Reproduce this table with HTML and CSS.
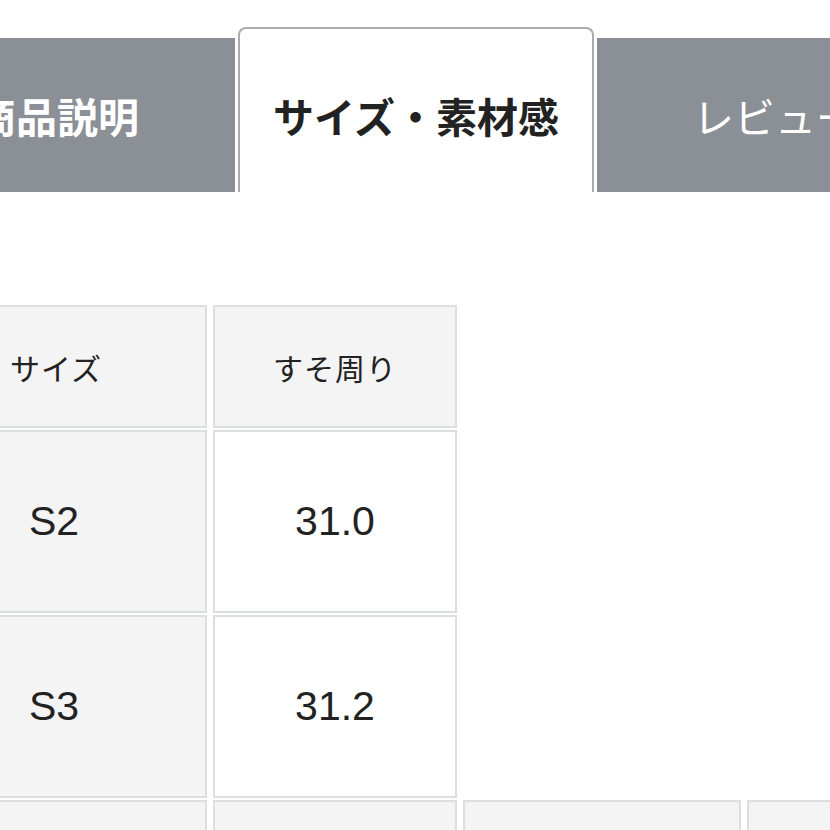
FILE: index.html
```html
<!DOCTYPE html>
<html lang="ja">
<head>
<meta charset="utf-8">
<link rel="stylesheet" href="styles.css">
</head>
<body>
<div class="page">
  <div class="tabs">
    <div class="tab tab-gray tab-bold">商品説明</div>
    <div class="tab tab-active">サイズ・素材感</div>
    <div class="tab tab-gray">レビュー</div>
  </div>

  <table class="size-table top-table">
    <tr class="row-head">
      <th class="c1 head">サイズ</th>
      <th class="c2 head">すそ周り</th>
    </tr>
    <tr class="row-body">
      <th class="c1 side num">S2</th>
      <td class="c2 num">31.0</td>
    </tr>
    <tr class="row-body">
      <th class="c1 side num">S3</th>
      <td class="c2 num">31.2</td>
    </tr>
  </table>

  <table class="size-table next-table">
    <tr class="row-next">
      <th class="c1 side"></th>
      <th class="c2 head"></th>
      <th class="c3 head"></th>
      <th class="c4 head"></th>
    </tr>
  </table>
</div>
</body>
</html>
```

FILE: styles.css
```css
html, body {
  margin: 0;
  padding: 0;
  background: #ffffff;
  overflow: hidden;
}

.page {
  width: 830px;
  height: 830px;
  overflow: hidden;
  font-family: "Noto Sans CJK JP", "Noto Sans", sans-serif;
}

.tabs {
  display: flex;
  align-items: flex-end;
  gap: 3px;
  margin-left: -121px;
  padding-top: 27px;
  height: 165px;
}

.tab {
  flex: 0 0 auto;
  width: 356px;
  box-sizing: border-box;
  display: flex;
  align-items: flex-end;
  justify-content: center;
  font-size: 41px;
  line-height: 41px;
  padding-bottom: 56px;
  white-space: nowrap;
}

.tab-gray {
  height: 154px;
  background: #8b8f96;
  color: #ffffff;
  font-weight: 400;
}

.tab-bold {
  font-weight: 700;
}

.tab-active {
  height: 165px;
  background: #ffffff;
  color: #222222;
  font-weight: 700;
  border: 2px solid #a9abae;
  border-bottom: none;
  border-radius: 8px 8px 0 0;
}

.size-table {
  border-collapse: separate;
  border-spacing: 6px 2px;
  margin-left: -105px;
  table-layout: fixed;
}

.top-table {
  width: 568px;
  margin-top: 111px;
}

.size-table th,
.size-table td {
  box-sizing: border-box;
  border: 2px solid #dcdee1;
  padding: 0;
  text-align: center;
  vertical-align: middle;
  color: #222222;
  font-weight: 400;
}

.c1 { width: 306px; }
.c2 { width: 244px; }
.c3 { width: 278px; }
.c4 { width: 300px; }

.head {
  background: #f4f4f5;
  font-size: 30px;
  letter-spacing: 1px;
}

.side {
  background: #f4f4f5;
}

.c2.num {
  background: #ffffff;
}

.num {
  font-family: "Liberation Sans", Arial, sans-serif;
  font-size: 41px;
}

.row-head { height: 123px; }
.row-body { height: 183px; }
.row-next { height: 60px; }

.next-table {
  width: 1158px;
  margin-top: 0;
  border-spacing: 6px 0;
}

.row-head .c1 {
  text-align: left;
  padding-left: 107px;
}
```
